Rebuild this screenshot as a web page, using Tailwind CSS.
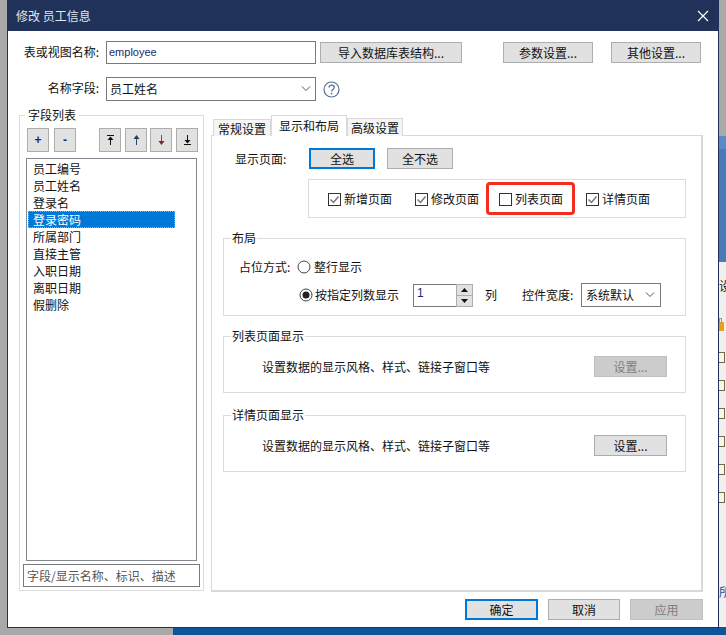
<!DOCTYPE html>
<html lang="zh-CN">
  <head>
    <meta charset="UTF-8" />
    <title>修改 员工信息</title>
    <script src="https://cdn.jsdelivr.net/npm/@tailwindcss/browser@4"></script>
  </head>
  <body class="relative w-[726px] h-[635px] overflow-hidden bg-[#f0f0f0] text-[12px] leading-[16px] text-[#111] font-['Noto_Sans_CJK_SC','Liberation_Sans',sans-serif]">
    <!-- desktop behind the dialog -->
    <div class="absolute left-0 top-0 w-[7px] h-[635px] bg-[#a9a9a9]"></div>
    <div class="absolute left-0 top-[627px] w-[173px] h-[8px] bg-[#a9a9a9]"></div>
    <div class="absolute left-[173px] top-[627px] w-[553px] h-[8px] bg-[#0f5499]"></div>
    <div class="absolute left-[719px] top-0 w-[7px] h-[136px] bg-[#a9a9a9]"></div>
    <div class="absolute left-[719px] top-[136px] w-[7px] h-[13px] bg-[#5a8acb]"></div>
    <div class="absolute left-[719px] top-[149px] w-[7px] h-[113px] bg-[#4a79b8]"></div>
    <div class="absolute left-[719px] top-[278px] w-[7px] h-[16px] overflow-hidden"><span class="absolute left-0 top-0">设</span></div>
    <div class="absolute left-[719px] top-[318px] w-[3px] h-[4px] border border-b-0 border-[#999]"></div>
    <div class="absolute left-[719px] top-[322px] w-[5px] h-[9px] bg-[#e8a020]"></div>
    <div class="absolute left-[719px] top-[352px] w-[6px] h-[11px] border border-l-0 border-[#6b6b45] bg-[#f7f7ea]"></div>
    <div class="absolute left-[719px] top-[380px] w-[6px] h-[11px] border border-l-0 border-[#6b6b45] bg-[#f7f7ea]"></div>
    <div class="absolute left-[719px] top-[408px] w-[6px] h-[11px] border border-l-0 border-[#6b6b45] bg-[#f7f7ea]"></div>
    <div class="absolute left-[719px] top-[436px] w-[6px] h-[11px] border border-l-0 border-[#6b6b45] bg-[#f7f7ea]"></div>
    <div class="absolute left-[719px] top-[464px] w-[6px] h-[11px] border border-l-0 border-[#6b6b45] bg-[#f7f7ea]"></div>
    <div class="absolute left-[719px] top-[492px] w-[6px] h-[11px] border border-l-0 border-[#6b6b45] bg-[#f7f7ea]"></div>
    <div class="absolute left-[719px] top-[584px] w-[7px] h-[16px] overflow-hidden text-[#0f5499]"><span class="absolute left-0 top-0">所</span></div>

    <!-- dialog window -->
    <div class="absolute left-[7px] top-0 w-[712px] h-[628px] bg-white border-x border-b border-[#20325a] flex flex-col">
      <div class="h-[31px] shrink-0 bg-[#20325a] text-[#dfe6ef] flex items-center justify-between pl-[8px] pr-[9px]">
        <span>修改 员工信息</span>
        <svg width="12" height="12" viewBox="0 0 12 12" fill="none" stroke="#fff" stroke-width="1.2"><path d="M1 1l10 10M11 1L1 11" /></svg>
      </div>

      <div class="flex flex-col pl-[11px] pr-[15px] pt-[10px] flex-1 min-h-0">
        <div class="flex items-center h-[23px]">
          <span class="w-[80px] shrink-0 text-right mr-[7px] pb-[2px]">表或视图名称:</span>
          <div class="w-[210px] shrink-0 h-[23px] border border-[#7a7a7a] flex items-center pl-[2px] pb-[2px] text-[11px] text-[#1a2a6c] font-['Liberation_Sans',sans-serif]">employee</div>
          <button class="ml-[4px] shrink-0 w-[142px] h-[21px] bg-[#e1e1e1] border border-[#adadad] flex items-center justify-center">导入数据库表结构...</button>
          <button class="ml-[41px] shrink-0 w-[90px] h-[21px] bg-[#e1e1e1] border border-[#adadad] flex items-center justify-center">参数设置...</button>
          <button class="ml-[18px] shrink-0 w-[90px] h-[21px] bg-[#e1e1e1] border border-[#adadad] flex items-center justify-center">其他设置...</button>
        </div>
        <div class="flex items-center h-[24px] mt-[13px]">
          <span class="w-[80px] shrink-0 text-right mr-[7px] pb-[2px]">名称字段:</span>
          <div class="w-[210px] shrink-0 h-[24px] border border-[#7a7a7a] flex items-center justify-between pl-[3px] pr-[4px]">
            <span>员工姓名</span>
            <svg width="10" height="6" viewBox="0 0 10 6" fill="none" stroke="#555"><path d="M1 .5l4 4 4-4" /></svg>
          </div>
          <svg class="ml-[7px]" width="17" height="17" viewBox="0 0 17 17" fill="none">
            <circle cx="8.5" cy="8.5" r="7.5" stroke="#5a6f96" stroke-width="1.2" />
            <path d="M6 6.6c0-3.2 5.2-3.2 5.2 0 0 2-2.6 1.9-2.6 4" stroke="#5a6f96" stroke-width="1.3" />
            <circle cx="8.6" cy="12.6" r=".9" fill="#5a6f96" />
          </svg>
        </div>

        <div class="flex mt-[6px] flex-1 min-h-0">
          <!-- field list -->
          <fieldset class="w-[185px] h-[484px] border border-[#dcdcdc] px-[3px] pb-[3px] flex flex-col">
            <legend class="ml-[2px] px-[3px]">字段列表</legend>
            <div class="flex items-center mt-[5px] pl-[4px] gap-[5px]">
              <button class="w-[22px] h-[24px] bg-[#e1e1e1] border border-[#adadad] font-bold text-[#1a2a6c] flex items-center justify-center font-['Liberation_Sans',sans-serif]">+</button>
              <button class="w-[22px] h-[24px] bg-[#e1e1e1] border border-[#adadad] font-bold text-[#1a2a6c] flex items-center justify-center font-['Liberation_Sans',sans-serif]">-</button>
              <button class="ml-[18px] w-[22px] h-[24px] bg-[#e1e1e1] border border-[#adadad] flex items-center justify-center">
                <svg width="9" height="10" viewBox="0 0 9 10" fill="none" stroke="#111"><path d="M1 .5h7M4.500 10V2.500" /><path d="M4.500 1.500L1.500 5h6z" fill="#111" stroke="none" /></svg>
              </button>
              <button class="-ml-[1px] w-[22px] h-[24px] bg-[#e1e1e1] border border-[#adadad] flex items-center justify-center">
                <svg width="7" height="10" viewBox="0 0 7 10" fill="none"><path d="M3.500 10V3" stroke="#2a4a6a" /><path d="M3.500 0L.5 4h6z" fill="#2a3a5a" /></svg>
              </button>
              <button class="-ml-[2px] w-[22px] h-[24px] bg-[#e1e1e1] border border-[#adadad] flex items-center justify-center">
                <svg width="7" height="10" viewBox="0 0 7 10" fill="none"><path d="M3.500 0v7" stroke="#a33" /><path d="M3.500 10L.5 6h6z" fill="#822" /></svg>
              </button>
              <button class="-ml-[1px] w-[22px] h-[24px] bg-[#e1e1e1] border border-[#adadad] flex items-center justify-center">
                <svg width="9" height="10" viewBox="0 0 9 10" fill="none" stroke="#111"><path d="M1 9.500h7M4.500 0v7.500" /><path d="M4.500 8.500L1.500 5h6z" fill="#111" stroke="none" /></svg>
              </button>
            </div>
            <ul class="mt-[6px] ml-[3px] w-[171px] h-[403px] border border-[#828790] pl-[1px] pt-[1px] leading-[17px]">
              <li class="pl-[5px] w-[147px] h-[17px]">员工编号</li>
              <li class="pl-[5px] w-[147px] h-[17px]">员工姓名</li>
              <li class="pl-[5px] w-[147px] h-[17px]">登录名</li>
              <li class="pl-[5px] w-[147px] h-[17px] bg-[#0078d7] text-white outline-1 outline-dotted -outline-offset-1 outline-[#f0a040]">登录密码</li>
              <li class="pl-[5px] w-[147px] h-[17px]">所属部门</li>
              <li class="pl-[5px] w-[147px] h-[17px]">直接主管</li>
              <li class="pl-[5px] w-[147px] h-[17px]">入职日期</li>
              <li class="pl-[5px] w-[147px] h-[17px]">离职日期</li>
              <li class="pl-[5px] w-[147px] h-[17px]">假删除</li>
            </ul>
            <div class="mt-[3px] w-[177px] h-[23px] border border-[#7a7a7a] flex items-center pl-[3px] text-[#555]">字段/显示名称、标识、描述</div>
          </fieldset>

          <!-- tabs -->
          <div class="ml-[7px] mt-[8px] w-[493px] flex flex-col">
            <div class="flex items-end h-[21px] relative z-10 pl-[2px] -mb-px">
              <div class="w-[58px] h-[17px] bg-[#f5f5f5] border border-b-0 border-[#d9d9d9] text-center leading-[17px]">常规设置</div>
              <div class="w-[76px] h-[21px] bg-white border border-b-0 border-[#d9d9d9] text-center leading-[19px]">显示和布局</div>
              <div class="w-[56px] h-[18px] bg-[#f5f5f5] border border-b-0 border-[#d9d9d9] text-center leading-[18px]">高级设置</div>
            </div>
            <div class="h-[457px] border border-[#d9d9d9] border-b-2 border-r-2 pl-[11px] pr-[15px]">
              <div class="flex items-center h-[21px] mt-[12px]">
                <span class="ml-[12px] w-[74px]">显示页面:</span>
                <button class="w-[66px] h-[21px] bg-[#e1e1e1] border-2 border-[#0078d7] flex items-center justify-center">全选</button>
                <button class="ml-[12px] w-[66px] h-[21px] bg-[#e1e1e1] border border-[#adadad] flex items-center justify-center">全不选</button>
              </div>
              <div class="relative ml-[85px] mt-[10px] w-[378px] h-[39px] border border-[#dcdcdc] flex items-center pl-[19px] pt-[1px]">
                <label class="flex items-center w-[87px]"><svg class="mr-[3px]" width="13" height="13" viewBox="0 0 13 13" fill="none"><rect x=".5" y=".5" width="12" height="12" stroke="#333" /><path d="M2.500 6.500l3 3 5-6" stroke="#777" stroke-width="1.500" /></svg>新增页面</label>
                <label class="flex items-center w-[84px]"><svg class="mr-[3px]" width="13" height="13" viewBox="0 0 13 13" fill="none"><rect x=".5" y=".5" width="12" height="12" stroke="#333" /><path d="M2.500 6.500l3 3 5-6" stroke="#777" stroke-width="1.500" /></svg>修改页面</label>
                <label class="flex items-center w-[87px]"><svg class="mr-[3px]" width="13" height="13" viewBox="0 0 13 13" fill="none"><rect x=".5" y=".5" width="12" height="12" stroke="#333" /></svg>列表页面</label>
                <label class="flex items-center"><svg class="mr-[3px]" width="13" height="13" viewBox="0 0 13 13" fill="none"><rect x=".5" y=".5" width="12" height="12" stroke="#333" /><path d="M2.500 6.500l3 3 5-6" stroke="#777" stroke-width="1.500" /></svg>详情页面</label>
                <div class="absolute left-[177px] top-[2px] w-[89px] h-[33px] border-[3px] border-[#f52d1f] rounded-[4px]"></div>
              </div>

              <fieldset class="mt-[12px] h-[86px] border border-[#dcdcdc] pl-[15px]">
                <legend class="ml-[-8px] px-[1px]">布局</legend>
                <div class="flex items-center h-[16px] mt-[13px]">
                  <span class="w-[58px]">占位方式:</span>
                  <svg class="mr-[3px]" width="14" height="14" viewBox="0 0 14 14" fill="none"><circle cx="7" cy="7" r="6" stroke="#444" /></svg>
                  <span>整行显示</span>
                </div>
                <div class="flex items-center h-[24px] mt-[8px] ml-[60px]">
                  <svg class="mr-[2px]" width="14" height="14" viewBox="0 0 14 14" fill="none"><circle cx="7" cy="7" r="6" stroke="#444" /><circle cx="7" cy="7" r="3.500" fill="#222" /></svg>
                  <span class="w-[98px]">按指定列数显示</span>
                  <div class="w-[60px] h-[23px] flex">
                    <span class="flex-1 border-y border-l border-[#7a7a7a] pl-[3px] text-[#1a2a6c] font-['Liberation_Sans',sans-serif]">1</span>
                    <div class="w-[17px] flex flex-col gap-[1px] border border-[#adadad] bg-[#adadad]">
                      <div class="flex-1 bg-[#e1e1e1] flex items-center justify-center"><svg width="7" height="4" viewBox="0 0 7 4"><path d="M3.500 0L7 4H0z" fill="#111" /></svg></div>
                      <div class="flex-1 bg-[#e1e1e1] flex items-center justify-center"><svg width="7" height="4" viewBox="0 0 7 4"><path d="M0 0h7L3.500 4z" fill="#111" /></svg></div>
                    </div>
                  </div>
                  <span class="ml-[12px] w-[37px]">列</span>
                  <span class="w-[59px]">控件宽度:</span>
                  <div class="w-[80px] h-[24px] border border-[#7a7a7a] flex items-center justify-between pl-[4px] pr-[5px]">
                    <span>系统默认</span>
                    <svg width="10" height="6" viewBox="0 0 10 6" fill="none" stroke="#555"><path d="M1 .5l4 4 4-4" /></svg>
                  </div>
                </div>
              </fieldset>

              <fieldset class="mt-[12px] h-[65px] border border-[#dcdcdc] pl-[38px]">
                <legend class="ml-[-31px] px-[1px]">列表页面显示</legend>
                <div class="flex items-center justify-between h-[21px] mt-[12px] pr-[18px]">
                  <span>设置数据的显示风格、样式、链接子窗口等</span>
                  <button class="w-[73px] h-[21px] bg-[#cccccc] border border-[#bfbfbf] text-[#808080] flex items-center justify-center">设置...</button>
                </div>
              </fieldset>

              <fieldset class="mt-[14px] h-[65px] border border-[#dcdcdc] pl-[38px]">
                <legend class="ml-[-31px] px-[1px]">详情页面显示</legend>
                <div class="flex items-center justify-between h-[21px] mt-[12px] pr-[18px]">
                  <span>设置数据的显示风格、样式、链接子窗口等</span>
                  <button class="w-[73px] h-[21px] bg-[#e1e1e1] border border-[#adadad] flex items-center justify-center">设置...</button>
                </div>
              </fieldset>
            </div>
          </div>
        </div>

        <div class="flex justify-end gap-[10px] h-[21px] mb-[7px] mt-[6px]">
          <button class="w-[73px] h-[21px] bg-[#e1e1e1] border-2 border-[#0078d7] flex items-center justify-center">确定</button>
          <button class="w-[72px] h-[21px] bg-[#e1e1e1] border border-[#adadad] flex items-center justify-center">取消</button>
          <button class="w-[73px] h-[21px] bg-[#cccccc] border border-[#bfbfbf] text-[#808080] flex items-center justify-center">应用</button>
        </div>
      </div>
    </div>
  </body>
</html>
